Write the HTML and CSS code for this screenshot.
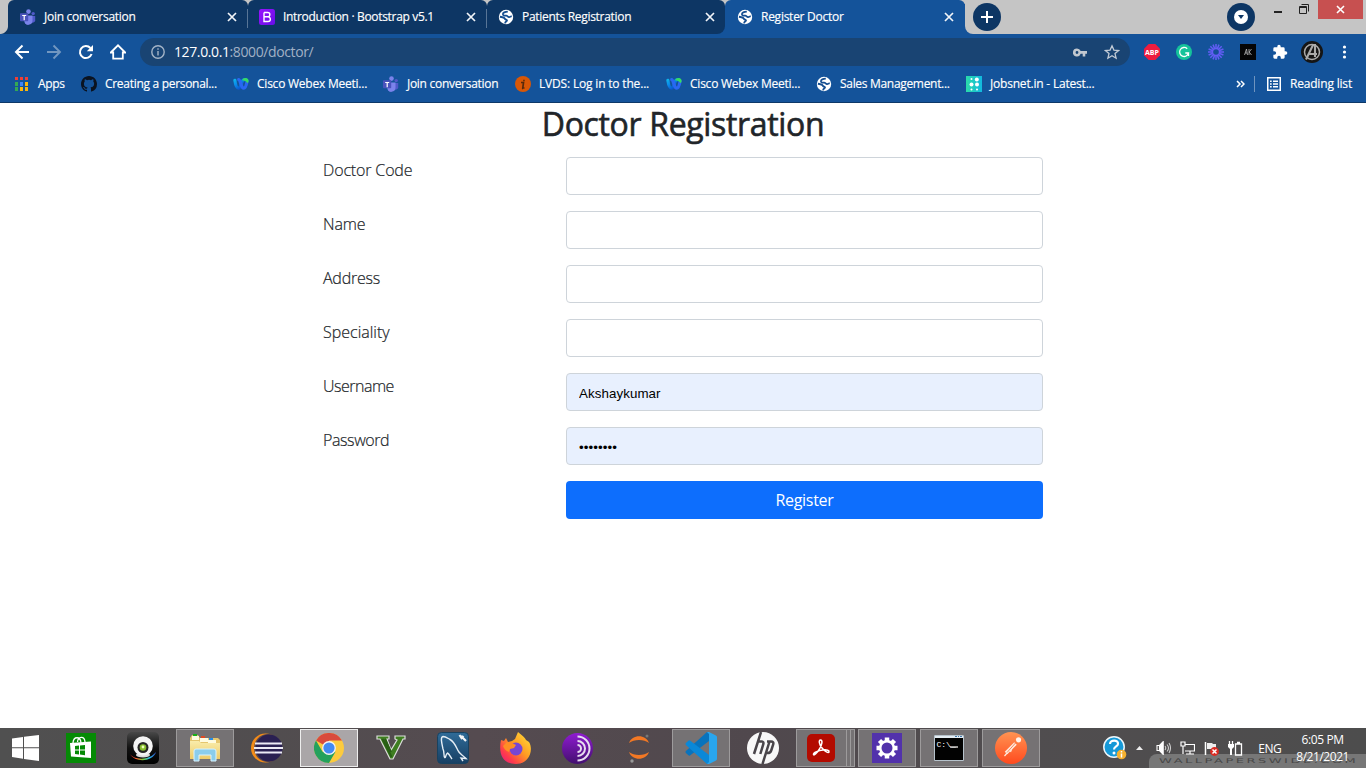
FILE: index.html
```html
<!DOCTYPE html>
<html lang="en">
<head>
<meta charset="utf-8">
<title>Register Doctor</title>
<link rel="stylesheet" href="styles.css">
</head>
<body>
<svg class="defs" width="0" height="0" aria-hidden="true">
  <defs>
    <linearGradient id="wbx" gradientUnits="userSpaceOnUse" x1="0" y1="2" x2="9" y2="14"><stop offset="0" stop-color="#0fc4ec"/><stop offset=".5" stop-color="#0a86e8"/><stop offset="1" stop-color="#0b3fc0"/></linearGradient>
    <linearGradient id="boot" x1="0" y1="0" x2="1" y2="1"><stop offset="0" stop-color="#9a13ff"/><stop offset="1" stop-color="#650ee8"/></linearGradient>
    <linearGradient id="jobs"><stop offset="0" stop-color="#2bdca9"/><stop offset="1" stop-color="#12b8e0"/></linearGradient>
    <linearGradient id="cam" x1="0" y1="0" x2="0" y2="1"><stop offset="0" stop-color="#484848"/><stop offset=".5" stop-color="#111"/><stop offset="1" stop-color="#000"/></linearGradient>
    <linearGradient id="rain"><stop offset="0" stop-color="#d22"/><stop offset=".25" stop-color="#f63"/><stop offset=".5" stop-color="#7bd13b"/><stop offset=".75" stop-color="#29b9e8"/><stop offset="1" stop-color="#3558d8"/></linearGradient>
    <linearGradient id="fold" x1="0" y1="0" x2="0" y2="1"><stop offset="0" stop-color="#f9ecab"/><stop offset="1" stop-color="#eecb68"/></linearGradient>
    <linearGradient id="ff" x1="1" y1="0" x2="0" y2="1"><stop offset="0" stop-color="#ffe83c"/><stop offset=".45" stop-color="#ff9a22"/><stop offset=".75" stop-color="#ff3b4c"/><stop offset="1" stop-color="#e31587"/></linearGradient>
    <linearGradient id="tor" x1="0" y1="0" x2="0" y2="1"><stop offset="0" stop-color="#8f1bd0"/><stop offset="1" stop-color="#43106f"/></linearGradient>
    <linearGradient id="sql" x1="0" y1="0" x2="0" y2="1"><stop offset="0" stop-color="#2f6b98"/><stop offset="1" stop-color="#173f63"/></linearGradient>
    <linearGradient id="post" x1="0" y1="0" x2="0" y2="1"><stop offset="0" stop-color="#ff9352"/><stop offset="1" stop-color="#ff4a1e"/></linearGradient>
    <symbol id="teams" viewBox="0 0 16 16">
      <circle cx="13.2" cy="4.6" r="1.7" fill="#5059c9"/><path d="M10 7h5.2v4.2a2.5 2.5 0 0 1-4.6 1.3z" fill="#5059c9"/>
      <circle cx="8.5" cy="2.6" r="2.3" fill="#7b83eb"/><path d="M4.500 6.400h8v5.200a4 4 0 0 1-8 .2z" fill="#7b83eb"/><path d="M4.500 11h4v4.700a4 4 0 0 1-4-4z" fill="#7b83eb"/>
      <rect y="4.2" width="8.2" height="8" rx=".8" fill="#4a53bc"/><path d="M2.2 6h4v1.100H4.800v4.200H3.600V7.100H2.200z" fill="#fff"/>
    </symbol>
    <symbol id="globe" viewBox="0 0 16 16">
      <circle cx="8" cy="8" r="7.200" fill="#fff"/>
      <path d="M9.800 2.600C7 2.700 4.800 3.700 4.900 5.200c.1 1.700 1.700 1.500 3.300 1.500 1.400 0 1.500 1.600 3 1.400 1.100-.2 1.300-.9 2.600-.6" fill="none" stroke="#154e91" stroke-width="1.700"/>
      <path d="M1.900 7.800C4 8.200 6.200 8 6.800 9.600c.5 1.400 2.200.7 2.200 1.800 0 1-1.700.9-1.900 2.900" fill="none" stroke="#154e91" stroke-width="1.900"/>
    </symbol>
    <symbol id="close" viewBox="0 0 10 10"><path d="M1 1l8 8M9 1L1 9" fill="none" stroke="#f2f5f9" stroke-width="1.7"/></symbol>
    <symbol id="webex" viewBox="0 0 16 16">
      <path d="M1.900 4.400c.6 4.500 1.800 7.800 3.600 7.800 1.900 0 2.500-3 3.200-5.300.7-2.300 1.700-3.300 3.100-3.300" fill="none" stroke="url(#wbx)" stroke-width="3.200" stroke-linecap="round"/>
      <path d="M5.700 3.600c2 .4 2.300 8.600 5 8.600 1.800 0 2.800-3.700 3.400-7" fill="none" stroke="#2a67f2" stroke-width="3.200" stroke-linecap="round"/>
      <path d="M9.500 3.200c2-1.800 5.200-1.400 6 .8.400 1.500-.3 2.900-1.300 2.900-.8-1.400-2.200-2.500-4.700-2.300z" fill="#36dc63"/>
    </symbol>
  </defs>
</svg>

<header class="browser">
  <div class="strip">
    <div class="tab"><svg class="fav" width="16" height="16"><use href="#teams"/></svg><span class="t1">Join conversation</span><svg class="x" width="10" height="10"><use href="#close"/></svg></div>
    <div class="tab"><svg class="fav" width="16" height="16" viewBox="0 0 16 16"><rect width="16" height="16" rx="2.5" fill="url(#boot)"/><path d="M5 3.500h3.700a2.100 2.100 0 0 1 0 4.300H5V3.500v9h4a2.300 2.300 0 0 0 0-4.700" fill="none" stroke="#fff" stroke-width="1.400"/></svg><span class="t2">Introduction · Bootstrap v5.1</span><svg class="x" width="10" height="10"><use href="#close"/></svg></div>
    <div class="tab last"><svg class="fav" width="16" height="16"><use href="#globe"/></svg><span class="t3">Patients Registration</span><svg class="x" width="10" height="10"><use href="#close"/></svg></div>
    <div class="tab active"><svg class="fav" width="16" height="16"><use href="#globe"/></svg><span class="t4">Register Doctor</span><svg class="x" width="10" height="10"><use href="#close"/></svg></div>
    <div class="strip-end">
      <svg width="28" height="28" viewBox="0 0 28 28"><circle cx="14" cy="14" r="14" fill="#0d3664"/><path d="M14 8v12M8 14h12" stroke="#fff" stroke-width="2"/></svg>
    </div>
    <div class="window">
      <svg class="search" width="28" height="28" viewBox="0 0 28 28"><circle cx="14" cy="14" r="14" fill="#0d3664"/><circle cx="14" cy="14" r="7" fill="#fff"/><path d="M11 12h6l-3 4z" fill="#0d3664"/></svg>
      <svg class="min" width="8" height="28"><path d="M0 12h8" stroke="#222" stroke-width="2"/></svg>
      <svg class="max" width="11" height="28" viewBox="0 0 11 28" fill="none" stroke="#222"><path d="M.5 6.500h7v7h-7zM2.500 4.500h7v7M0 7.500h8"/></svg>
      <div class="quit"><svg width="9" height="9" viewBox="0 0 9 9"><path d="M1 1l7 7M8 1L1 8" stroke="#fff" stroke-width="1.600"/></svg></div>
    </div>
  </div>

  <div class="toolbar">
    <div class="nav">
      <svg width="16" height="16" viewBox="0 0 16 16" fill="none" stroke="#fff" stroke-width="2"><path d="M15 8H2.500M8.500 1.500L2 8l6.500 6.500"/></svg>
      <svg width="16" height="16" viewBox="0 0 16 16" fill="none" stroke="#7297c0" stroke-width="1.900"><path d="M1 8h12.500M7.500 1.500L14 8l-6.500 6.500"/></svg>
      <svg width="16" height="16" viewBox="0 0 16 16"><path d="M13.600 10A6 6 0 1 1 12.400 4" fill="none" stroke="#fff" stroke-width="2"/><path d="M15 1v6.200H8.800z" fill="#fff"/></svg>
      <svg width="16" height="16" viewBox="0 0 16 16"><path d="M.8 8.500L8 1.300l7.200 7.200H12.800v6.200H3.200V8.500z" fill="none" stroke="#fff" stroke-width="1.800"/></svg>
    </div>
    <div class="omnibox">
      <svg width="14" height="14" viewBox="0 0 14 14" fill="none" stroke="#a4b4c7" stroke-width="1.400"><circle cx="7" cy="7" r="6.200"/><path d="M7 6v4.500M7 3.300v1.500"/></svg>
      <span class="url">127.0.0.1<i>:8000/doctor/</i></span>
      <svg class="key" width="14" height="9" viewBox="0 0 14 9"><path d="M4 .5a4 4 0 1 0 3.700 5.300h2V8.500h2.600V5.800H14V3H7.700A4 4 0 0 0 4 .5zm0 2.600a1.400 1.400 0 1 1 0 2.800 1.400 1.400 0 0 1 0-2.800z" fill="#c2c8cf" fill-rule="evenodd"/></svg>
      <svg width="16" height="16" viewBox="0 0 16 16"><path d="M8 1.800l1.900 4.300 4.700.4L11 9.600l1.100 4.600L8 11.700l-4.100 2.500L5 9.600 1.400 6.500l4.700-.4z" fill="none" stroke="#c2cbd6" stroke-width="1.300"/></svg>
    </div>
    <div class="ext">
      <svg width="16" height="16" viewBox="0 0 16 16"><path d="M4.700 0h6.600L16 4.700v6.600L11.300 16H4.700L0 11.300V4.700z" fill="#ee1c3f"/><text x="8" y="10.900" text-anchor="middle" class="abp" textLength="14" lengthAdjust="spacingAndGlyphs">ABP</text></svg>
      <svg width="16" height="16" viewBox="0 0 16 16"><circle cx="8" cy="8" r="8" fill="#15c39a"/><path d="M11.200 4.700A4.500 4.500 0 1 0 12.500 9H9.300M12.500 12V9" fill="none" stroke="#fff" stroke-width="1.300"/></svg>
      <svg width="16" height="16" viewBox="-8 -8 16 16"><g stroke="#625df5" stroke-width="1.500"><path d="M0-8V8M-8 0H8M-5.700-5.700L5.700 5.700M5.700-5.700L-5.700 5.700M-3-7.400L3 7.400M3-7.400L-3 7.400M-7.400-3L7.400 3M-7.400 3L7.400-3"/></g><circle r="2.800" fill="#154f98"/></svg>
      <svg width="16" height="16" viewBox="0 0 16 16"><rect width="16" height="16" fill="#050505"/><path d="M4.500 11l2-6 1 6M5.200 9h2M9 5v6M11.500 5L9.200 8l2.300 3" fill="none" stroke="#bbb" stroke-width=".8"/></svg>
      <svg width="16" height="16" viewBox="0 0 24 24"><path d="M20.500 11H19V7a2 2 0 0 0-2-2h-4V3.500a2.500 2.500 0 0 0-5 0V5H4a2 2 0 0 0-2 2v3.800h1.500a2.700 2.700 0 0 1 0 5.400H2V20a2 2 0 0 0 2 2h3.800v-1.500a2.700 2.700 0 0 1 5.400 0V22H17a2 2 0 0 0 2-2v-4h1.500a2.500 2.500 0 0 0 0-5z" fill="#fff"/></svg>
      <svg class="avatar" width="22" height="22" viewBox="0 0 22 22"><circle cx="11" cy="11" r="11" fill="#151515"/><g fill="none" stroke="#aaa"><circle cx="11" cy="11" r="7.500" stroke-width="1.500"/><path d="M5 18.500L12 4h2v12M7.500 13H16" stroke-width="2.100"/></g></svg>
      <svg width="16" height="16" viewBox="0 0 16 16" fill="#fff"><circle cx="8.500" cy="3" r="1.600"/><circle cx="8.500" cy="8" r="1.600"/><circle cx="8.500" cy="13" r="1.600"/></svg>
    </div>
  </div>

  <div class="bookmarks">
    <div class="bm apps"><svg width="14" height="14" viewBox="0 0 14 14"><path d="M0 0h3v3H0zM5 0h3v3H5zM10 0h3v3h-3z" fill="#ee4035"/><path d="M0 5h3v4H0zM0 10h3v4H0z" fill="#35a853"/><path d="M5 5h3v4H5z" fill="#4285f4"/><path d="M10 5h3v4h-3zM5 10h3v4H5zM10 10h3v4h-3z" fill="#fbb60b"/></svg><span class="b1">Apps</span></div>
    <div class="bm"><svg width="16" height="16" viewBox="0 0 16 16"><path fill="#0b1320" d="M8 0C3.580 0 0 3.580 0 8c0 3.540 2.290 6.530 5.470 7.590.4.070.55-.17.55-.38 0-.19-.01-.82-.01-1.490-2.010.37-2.530-.49-2.690-.94-.09-.23-.48-.94-.82-1.130-.28-.15-.68-.52-.01-.53.63-.01 1.080.58 1.230.82.72 1.210 1.870.87 2.330.66.070-.52.28-.87.51-1.070-1.780-.2-3.640-.89-3.640-3.950 0-.87.31-1.590.82-2.150-.08-.2-.36-1.020.08-2.120 0 0 .67-.21 2.200.82a7.600 7.600 0 0 1 4 0c1.530-1.040 2.200-.82 2.200-.82.44 1.100.16 1.920.08 2.120.51.56.82 1.270.82 2.150 0 3.070-1.870 3.750-3.650 3.950.29.25.54.73.54 1.480 0 1.070-.01 1.930-.01 2.200 0 .21.15.46.55.38A8 8 0 0 0 16 8c0-4.420-3.580-8-8-8z"/></svg><span class="b2">Creating a personal...</span></div>
    <div class="bm"><svg width="16" height="16"><use href="#webex"/></svg><span class="b3">Cisco Webex Meeti...</span></div>
    <div class="bm"><svg width="16" height="16"><use href="#teams"/></svg><span class="b4">Join conversation</span></div>
    <div class="bm"><svg width="16" height="16" viewBox="0 0 16 16"><circle cx="8" cy="8" r="8" fill="#d85706"/><path d="M6 6.500h2.500L7.800 12H9.500M7 12.500h1M9.700 4.500H8.200" fill="none" stroke="#56290b" stroke-width="1.700"/></svg><span class="b5">LVDS: Log in to the...</span></div>
    <div class="bm"><svg width="16" height="16"><use href="#webex"/></svg><span class="b3">Cisco Webex Meeti...</span></div>
    <div class="bm"><svg width="16" height="16"><use href="#globe"/></svg><span class="b6">Sales Management...</span></div>
    <div class="bm"><svg width="16" height="16" viewBox="0 0 16 16"><rect width="16" height="16" fill="url(#jobs)"/><g fill="#fff"><circle cx="5.500" cy="3" r="1"/><circle cx="10.800" cy="3.500" r="2"/><circle cx="5.500" cy="8.500" r="2"/><circle cx="11" cy="8.500" r="2"/><circle cx="5.500" cy="13.500" r="1"/><circle cx="11" cy="13.500" r="1"/></g></svg><span class="b7">Jobsnet.in - Latest...</span></div>
    <div class="reading">
      <svg width="9" height="8" viewBox="0 0 9 8" fill="none" stroke="#fff" stroke-width="1.500"><path d="M1 1l3 3-3 3M5 1l3 3-3 3"/></svg>
      <svg class="list" width="14" height="14" viewBox="0 0 14 14" fill="none" stroke="#fff" stroke-width="1.500"><path d="M.75.75h12.500v12.500H.75zM3 4.250h1.700M6 4.250h5M3 7h1.700M6 7h5M3 9.750h1.700M6 9.750h5"/></svg>
      <span class="b8">Reading list</span>
    </div>
  </div>
</header>

<main class="page">
  <h2 class="title"><span>Doctor Registration</span></h2>
  <form class="form">
    <label class="l1" for="code">Doctor Code</label><input id="code" class="field" type="text">
    <label class="l2" for="name">Name</label><input id="name" class="field" type="text">
    <label class="l3" for="address">Address</label><input id="address" class="field" type="text">
    <label class="l4" for="spec">Speciality</label><input id="spec" class="field" type="text">
    <label class="l5" for="user">Username</label><input id="user" class="field filled" type="text" value="Akshaykumar">
    <label class="l6" for="pass">Password</label><input id="pass" class="field filled dots" type="text" value="••••••••">
    <button class="submit" type="button">Register</button>
  </form>
</main>

<footer class="taskbar">
  <div class="start"><svg width="27" height="26" viewBox="0 0 27 26" fill="#fff"><path d="M0 3.500l11-1.600v10.300H0zM12 1.700L27 0v12.200H12zM0 13.200h11v10.500L0 22zM12 13.200h15V26l-15-2z"/></svg></div>
  <div class="slot"><svg width="30" height="30" viewBox="0 0 30 30"><rect width="30" height="30" fill="#058a05"/><path d="M4 10l21-1.500V25L5 23.500z" fill="#fff"/><path d="M7 10c.5-7 7.500-7 8 0M11.500 9c.5-6 7-6.500 7.500 0" fill="none" stroke="#fff" stroke-width="1.300"/><path d="M9 13l4-.4v4H9zM14 12.500l5-.5v4.500h-5zM9 17.500h4v4l-4-.4zM14 17.500h5v4.700l-5-.6z" fill="#058a05"/></svg></div>
  <div class="slot"><svg width="32" height="32" viewBox="0 0 32 32"><rect width="32" height="32" rx="5" fill="url(#cam)"/><path d="M3 22c4 6 19 7 26-2-3 10-21 11-26 2z" fill="url(#rain)"/><ellipse cx="16" cy="23" rx="7" ry="2.500" fill="#ddd"/><circle cx="16" cy="14" r="9.800" fill="#f4f4f4"/><circle cx="16" cy="15.500" r="5.500" fill="#262626"/><circle cx="16" cy="15.500" r="3.300" fill="#86bd2c"/><circle cx="16" cy="15" r="1.400" fill="#efffbe"/></svg></div>
  <div class="slot open"><svg width="32" height="30" viewBox="0 0 32 30"><path d="M1 5l2-3h6l2 3h18l2 2v19H1z" fill="#e5c66e"/><path d="M3 3h7v4H3zM11 5h8v4h-8zM19 7h8v4h-8z" fill="#fffbe0"/><path d="M4 1h4v2H4z" fill="#18ad18"/><path d="M12 3h4v2h-4z" fill="#dd4b24"/><path d="M20 5h4v2h-4z" fill="#288ce5"/><path d="M1 8h9l2 2h19v16H1z" fill="url(#fold)"/><path d="M5 28V18q0-2 2-2h18q2 0 2 2v10h-5v-6H10v6z" fill="#8bcdec" stroke="#d8f3ff"/></svg></div>
  <div class="slot"><svg width="32" height="30" viewBox="0 0 32 30"><circle cx="14.500" cy="15" r="14.500" fill="#f48c19"/><circle cx="17" cy="15" r="14" fill="#5a4a4e"/><circle cx="18" cy="15" r="13.500" fill="#2a2052"/><path d="M4 10.500h27M3 15h29M4 19.500h27" stroke="#eceaf5" stroke-width="2"/></svg></div>
  <div class="slot open current"><svg width="30" height="30" viewBox="-15 -15 30 30"><circle r="15" fill="#fccb3d"/><path d="M0 0L-13-7.500A15 15 0 0 1 13-7.500H0z" fill="#d94b3d"/><path d="M-13-7.500A15 15 0 0 0 0 15L6.500 3.700H-6.500z" fill="#24a15d"/><circle r="6.900" fill="#f3f3f3"/><circle r="5.600" fill="#438af3"/></svg></div>
  <div class="slot"><svg width="30" height="26" viewBox="0 0 30 26"><path d="M1 1h12v3h-2l4 11 6-10-2-1V1h10v3h-2L17 24h-3L4 4H1z" fill="#3e7d20" stroke="#ddd" stroke-width="1.200"/><path d="M6.500 4l9 18M9 4l6 13" stroke="#285f15" stroke-width="2"/></svg></div>
  <div class="slot"><svg width="32" height="32" viewBox="0 0 32 32"><rect x=".5" y=".5" width="31" height="31" rx="4" fill="url(#sql)" stroke="#184260"/><path d="M8 26c-2-2 0-5-2-9C5 12 3 5 6 4.500c3 0 5 2 7 3 4 2 6 7 8 11 1 3 4 4 8 8l-5-.5 2 3M8 26c1-2 1-4 2.500-5 2 1 3 4 4.500 6" fill="none" stroke="#e5eef5" stroke-width="1.400"/><path d="M24 4l5 5M22.500 3l2 3 2-2" stroke="#f3f5f7" stroke-width="2.200" fill="none"/></svg></div>
  <div class="slot"><svg width="31" height="32" viewBox="0 0 31 32"><path d="M1 8l3 1 2-3 2 4 4-1 3-2 3-7c3 3 7 5 8 8l3 2c5 8 0 22-13 22S-2 22 1 8z" fill="url(#ff)"/><circle cx="16" cy="17" r="6.500" fill="#7846d5"/><path d="M3 14l4-4 5 1 4 2-2 3-4 1-1 3c-3-1-5-3-6-6z" fill="#ff8e25"/></svg></div>
  <div class="slot"><svg width="31" height="31" viewBox="0 0 31 31"><circle cx="15.500" cy="15.500" r="15.500" fill="url(#tor)"/><path d="M15.500 3.500a12 12 0 0 1 0 24M15.500 8a7.500 7.500 0 0 1 0 15M15.500 12a3.500 3.500 0 0 1 0 7" fill="none" stroke="#e7ddef" stroke-width="2"/></svg></div>
  <div class="slot"><svg width="22" height="30" viewBox="0 0 22 30"><path d="M1 10c3-9 17-9 20 0C16 6 6 6 1 10zM1 19c3 9 17 9 20 0-5 4-15 4-20 0z" fill="#f37824"/><circle cx="19" cy="3" r="1.500" fill="#777"/><circle cx="4" cy="28" r="1.700" fill="#999"/></svg></div>
  <div class="slot open"><svg width="32" height="32" viewBox="0 0 32 32"><path d="M24 .5v8.500L5 23.500q-.8.500-1.600-.2L.9 21q-.9-1 0-1.900L22 0z" fill="#0873bd"/><path d="M24 31.500V23L5 8.500q-.8-.5-1.600.2L.9 11q-.9 1 0 1.900L22 32z" fill="#0a88d8"/><path d="M22 0h2l7 3.500q1 .6 1 1.800v21.400q0 1.200-1 1.800L24 32h-2l2-2V2z" fill="#29a6ee"/></svg></div>
  <div class="slot"><svg width="32" height="32" viewBox="0 0 32 32"><circle cx="16" cy="16" r="16" fill="#f8f8f8"/><path d="M14 0L7 22M11.500 9.500h3q2.500 0 1.800 2.700L13.300 22M22.500 9.500L15.500 32M20 9.500h4q3 0 2.200 3l-2 6q-.8 2.500-3.500 2.500H19" fill="none" stroke="#49454a" stroke-width="2.500"/></svg></div>
  <div class="slot open stack"><svg width="28" height="28" viewBox="0 0 28 28"><rect width="28" height="28" rx="5" fill="#b30b00"/><path d="M13.500 6c2.500 0 1.500 5-1 9s-5.500 7-6 5.500C6 18.500 12 16.500 16 16s6.500.5 6 2-4-.5-7-4-3.500-8-1.500-8z" fill="none" stroke="#fff" stroke-width="1.500"/></svg><i></i><i></i></div>
  <div class="slot open"><svg width="30" height="30" viewBox="-15 -15 30 30"><rect x="-15" y="-15" width="30" height="30" fill="#5232ab"/><path d="M0-10.500v21M-10.500 0h21M-7.500-7.500l15 15M7.500-7.500l-15 15" stroke="#fff" stroke-width="4.500"/><circle r="8" fill="#fff"/><circle r="5.500" fill="#5232ab"/></svg></div>
  <div class="slot open"><svg width="30" height="26" viewBox="0 0 30 26"><path d="M.5.500h29v25H.5z" fill="#020202" stroke="#b7c3cc"/><path d="M1 1h28v2H1z" fill="#e4edf3"/><path d="M21 1.500h2M24 1.500h1M26 1.500h2" stroke="#3f78ae"/><text x="2.500" y="12" class="cmd">C:\_</text><path d="M16 12h8" stroke="#fff" stroke-width="1.200"/></svg></div>
  <div class="slot open"><svg width="32" height="32" viewBox="0 0 32 32"><circle cx="16" cy="16" r="16" fill="url(#post)"/><path d="M11 21L20.500 11.500" stroke="#ffe9dc" stroke-width="3.600"/><circle cx="23.500" cy="7.800" r="2.600" fill="#fff3eb"/><path d="M9.500 24l3-3.500M17 16l-1.500 4" stroke="#ffe9dc" stroke-width="1.200"/><path d="M12 20.500L20.500 11" stroke="#f0703c" stroke-width=".8"/></svg></div>

  <div class="watermark"><span>WALLPAPERSWIDE.COM</span></div>
  <div class="tray">
    <svg width="24" height="24" viewBox="0 0 24 24"><circle cx="11" cy="11" r="10.200" fill="#1599d8" stroke="#eef7fb" stroke-width="1.500"/><path d="M7 8c0-4.500 8.500-4.500 8 0-.2 2.500-4 2.500-4 5.500" fill="none" stroke="#fff" stroke-width="2.200"/><circle cx="11" cy="17" r="1.500" fill="#fff"/><circle cx="18.500" cy="18.500" r="4.800" fill="#f4b02f"/><path d="M18.500 17.500v4M18.500 15v1.500" stroke="#fff" stroke-width="1.500"/></svg>
    <svg width="7" height="4" viewBox="0 0 7 4"><path d="M0 4l3.500-4L7 4z" fill="#eee"/></svg>
    <svg width="15" height="14" viewBox="0 0 15 14" fill="none" stroke="#fff" stroke-width="1.100"><path d="M1 4.500h2.500L7 1v12L3.500 9.500H1z"/><path d="M3.500 5L7 1v12L3.500 9z" fill="#fff"/><path d="M9 5q1.500 2 0 4M11 3.500q3 3.500 0 7M13 2q3 5 0 10" stroke="#ccc"/></svg>
    <svg width="15" height="14" viewBox="0 0 15 14" fill="none" stroke="#fff" stroke-width="1.200"><path d="M5 3.500h9.500v6.500H5M10 10v3M6 13h8M1 1h4v4H1zM3 5v8"/></svg>
    <svg width="15" height="15" viewBox="0 0 15 15"><path d="M1.500 1v13" stroke="#fff" stroke-width="1.500"/><path d="M3 2h5l1 1h3v6H9L7 8H3z" fill="#eee"/><circle cx="10.500" cy="10.500" r="4.400" fill="#dd2b22"/><path d="M8.500 8.500l4 4M12.500 8.500l-4 4" stroke="#fff" stroke-width="1.500"/></svg>
    <svg width="15" height="15" viewBox="0 0 15 15" fill="none" stroke="#fff" stroke-width="1.300"><path d="M7.500 3h6v11h-6zM9 1.500h3M1.500 0v3M4.500 0v3"/><path d="M0 3h6v3L4 8v6H2V8L0 6z" fill="#fff" stroke="none"/></svg>
    <span class="lang">ENG</span>
    <span class="clock"><b class="c1">6:05 PM</b><b class="c2">8/21/2021</b></span>
  </div>
</footer>
</body>
</html>
```

FILE: styles.css
```css
* { box-sizing: border-box; }
body {
  margin: 0; width: 1366px; height: 768px; overflow: hidden;
  display: flex; flex-direction: column; background: #fff;
  font-family: "Open Sans", "Noto Sans", sans-serif;
}
svg { display: block; flex: none; }
.defs { position: absolute; }
span { white-space: nowrap; }

.browser { height: 103px; background: #14539a; border-bottom: 1px solid #0d3868; color: #fff; font-size: 12px; }
.strip { height: 34px; background: #c5c5c5; display: flex; padding-left: 8px; }
.strip::before { content: ""; width: 8px; margin-left: -8px; background: radial-gradient(circle at 0 26px, #c5c5c5 8px, #0d3664 8.5px) 0 26px / 8px 8px no-repeat, #c5c5c5; background-image: radial-gradient(circle at 0 0, #c5c5c5 7.5px, #0d3664 8.5px); }
.tab {
  width: 239px; height: 34px; background: #0d3664; border-radius: 6px 6px 0 0;
  display: flex; align-items: center; padding: 0 10px 0 12px; gap: 8px;
  background-image: linear-gradient(#587596, #587596); background-size: 1px 19px;
  background-repeat: no-repeat; background-position: right 9px;
}
.tab span { margin-top: -1px; -webkit-text-stroke: .15px #fff; }
.tab .x { margin-left: auto; }
.tab:first-child { width: 240px; padding-right: 11px; }
.tab:nth-child(2) { padding: 0 11px; }
.tab.last { width: 238px; padding-left: 11px; background-image: none; border-radius: 6px 6px 8px 0; box-shadow: 6px 8px 0 #14539a; }
.tab.active { width: 240px; padding-right: 11px; background: #14539a; z-index: 1; }
.strip-end { padding: 3px 8px; background: #c5c5c5; border-bottom-left-radius: 8px; box-shadow: -4px 4px 0 #14539a; }
.window { margin-left: auto; display: flex; }
.window .search { margin: 3px 19px 0 0; }
.window .min { margin-right: 17px; }
.window .max { margin-right: 8px; }
.quit { width: 45px; height: 19px; margin-right: 3px; background: #c75050; display: flex; align-items: center; justify-content: center; }

.toolbar { position: relative; height: 36px; display: flex; align-items: center; background: #14539a; }
.nav { width: 140px; padding-left: 14px; display: flex; gap: 16px; }
.omnibox { width: 990px; height: 28px; border-radius: 14px; background: #194473; display: flex; align-items: center; padding: 0 10px 0 11px; }
.url { margin: -1px 0 0 9px; font-size: 14px; letter-spacing: -.39px; }
.url i { font-style: normal; color: #a1b1c5; }
.key { margin-left: auto; margin-right: 17px; }
.ext { display: flex; gap: 16px; align-items: center; padding-left: 14px; }
.avatar { margin: 0 -3px; }
.abp { font: bold 7px "Open Sans", sans-serif; fill: #fff; }

.bookmarks { height: 32px; padding-left: 15px; display: grid; align-items: center; grid-template-columns: 66px 152px 150px 132px 151px 150px 150px 1fr auto; padding-bottom: 4px; background: #14539a; }
.bm { display: flex; align-items: center; gap: 8px; }
.apps { gap: 9px; }
.bookmarks span { margin-top: -1px; -webkit-text-stroke: .15px #fff; }
.reading { display: flex; align-items: center; padding-right: 14px; }
.reading::before { content: ""; order: 1; width: 1px; height: 16px; background: #6f94bf; margin-left: 9px; }
.reading .list { order: 2; margin: 0 9px 0 12px; }
.reading .b8 { order: 3; }

.t1 { letter-spacing: -.27px; } .t2 { letter-spacing: -.32px; } .t3 { letter-spacing: -.3px; } .t4 { letter-spacing: -.26px; }
.b1 { letter-spacing: -.35px; }
.b2 { letter-spacing: -.3px; }
.b3 { letter-spacing: -.23px; }
.b4 { letter-spacing: -.29px; }
.b5 { letter-spacing: -.18px; }
.b6 { letter-spacing: -.31px; }
.b7 { letter-spacing: -.2px; }
.b8 { letter-spacing: -.18px; }

.page { height: 625px; padding-top: 2px; color: #212529; }
.title { margin: 0 0 14px; font-size: 32px; line-height: 38px; font-weight: 500; text-align: center; letter-spacing: -.34px; -webkit-text-stroke: .6px #212529; }
.form { width: 720px; margin: 0 auto; display: grid; grid-template-columns: 243px 477px; row-gap: 16px; font-size: 16px; line-height: 24px; font-weight: 300; }
.form label { letter-spacing: -.15px; padding-top: 1px; height: 25px; -webkit-text-stroke: .2px #212529; }
.form .l3 { letter-spacing: -.25px; }
.form .l4 { letter-spacing: 0; }
.form .l5 { letter-spacing: -.5px; }
.form .l6 { letter-spacing: -.4px; }
.field { height: 38px; width: 100%; border: 1px solid #ced4da; border-radius: 4px; padding: 7px 12px 5px; background: #fff; color: #000; font: 13.333px "Liberation Sans", Arial, sans-serif; letter-spacing: .08px; outline: 0; }
.filled { background: #e8f0fe; }
.submit { grid-column: 2; height: 38px; padding: 0 0 1px; border: 0; border-radius: 4px; background: #0d6efd; color: #fff; font: 16px "Open Sans", sans-serif; letter-spacing: -.3px; }

.taskbar { position: relative; height: 40px; display: flex; background: linear-gradient(90deg, #505050, #514d4f 20%, #554b50 35%, #50484d 55%, #504d4f 75%, #4d4d4d); }
.start { width: 50px; padding: 7px 0 0 12px; }
.slot { width: 62px; display: flex; align-items: center; justify-content: center; position: relative; z-index: 0; }
.slot.open::before { content: ""; position: absolute; z-index: -1; inset: 1px 2px; background: #757274; border: 1px solid #9d9b9c; }
.slot.current::before { background: #aaa6a8; border-color: #eee; }
.slot.stack { padding-right: 8px; }
.slot.stack::before { right: 9px; }
.stack i { position: absolute; top: 1px; bottom: 1px; right: 5px; width: 4px; border: 1px solid #9d9b9c; border-left: 0; background: #757274; }
.stack i + i { right: 1px; }
.cmd { font: 8px "Liberation Mono", monospace; fill: #fff; }
.watermark { position: absolute; right: 0; bottom: 0; width: 217px; height: 14px; background: #777; border-top-left-radius: 8px; overflow: hidden; color: #484848; font: 6.5px "DejaVu Sans", sans-serif; line-height: 14px; padding-left: 10px; }
.watermark span { display: inline-block; letter-spacing: 1.25px; transform: scaleX(2); transform-origin: 0 50%; }
.tray { position: relative; margin-left: auto; display: flex; align-items: center; color: #fff; font-size: 12px; padding-right: 17px; }
.tray svg:nth-of-type(1) { margin-right: 9px; }
.tray svg:nth-of-type(2) { margin-right: 13px; }
.tray svg:nth-of-type(n+3) { margin-right: 9px; }
.tray .lang { margin: 0 15px 0 6px; letter-spacing: -.5px; }
.clock { display: flex; flex-direction: column; align-items: center; line-height: 17px; padding-bottom: 1px; }
.clock b { font-weight: 400; }
.c1 { letter-spacing: -.4px; }
.c2 { letter-spacing: -.45px; }
```
